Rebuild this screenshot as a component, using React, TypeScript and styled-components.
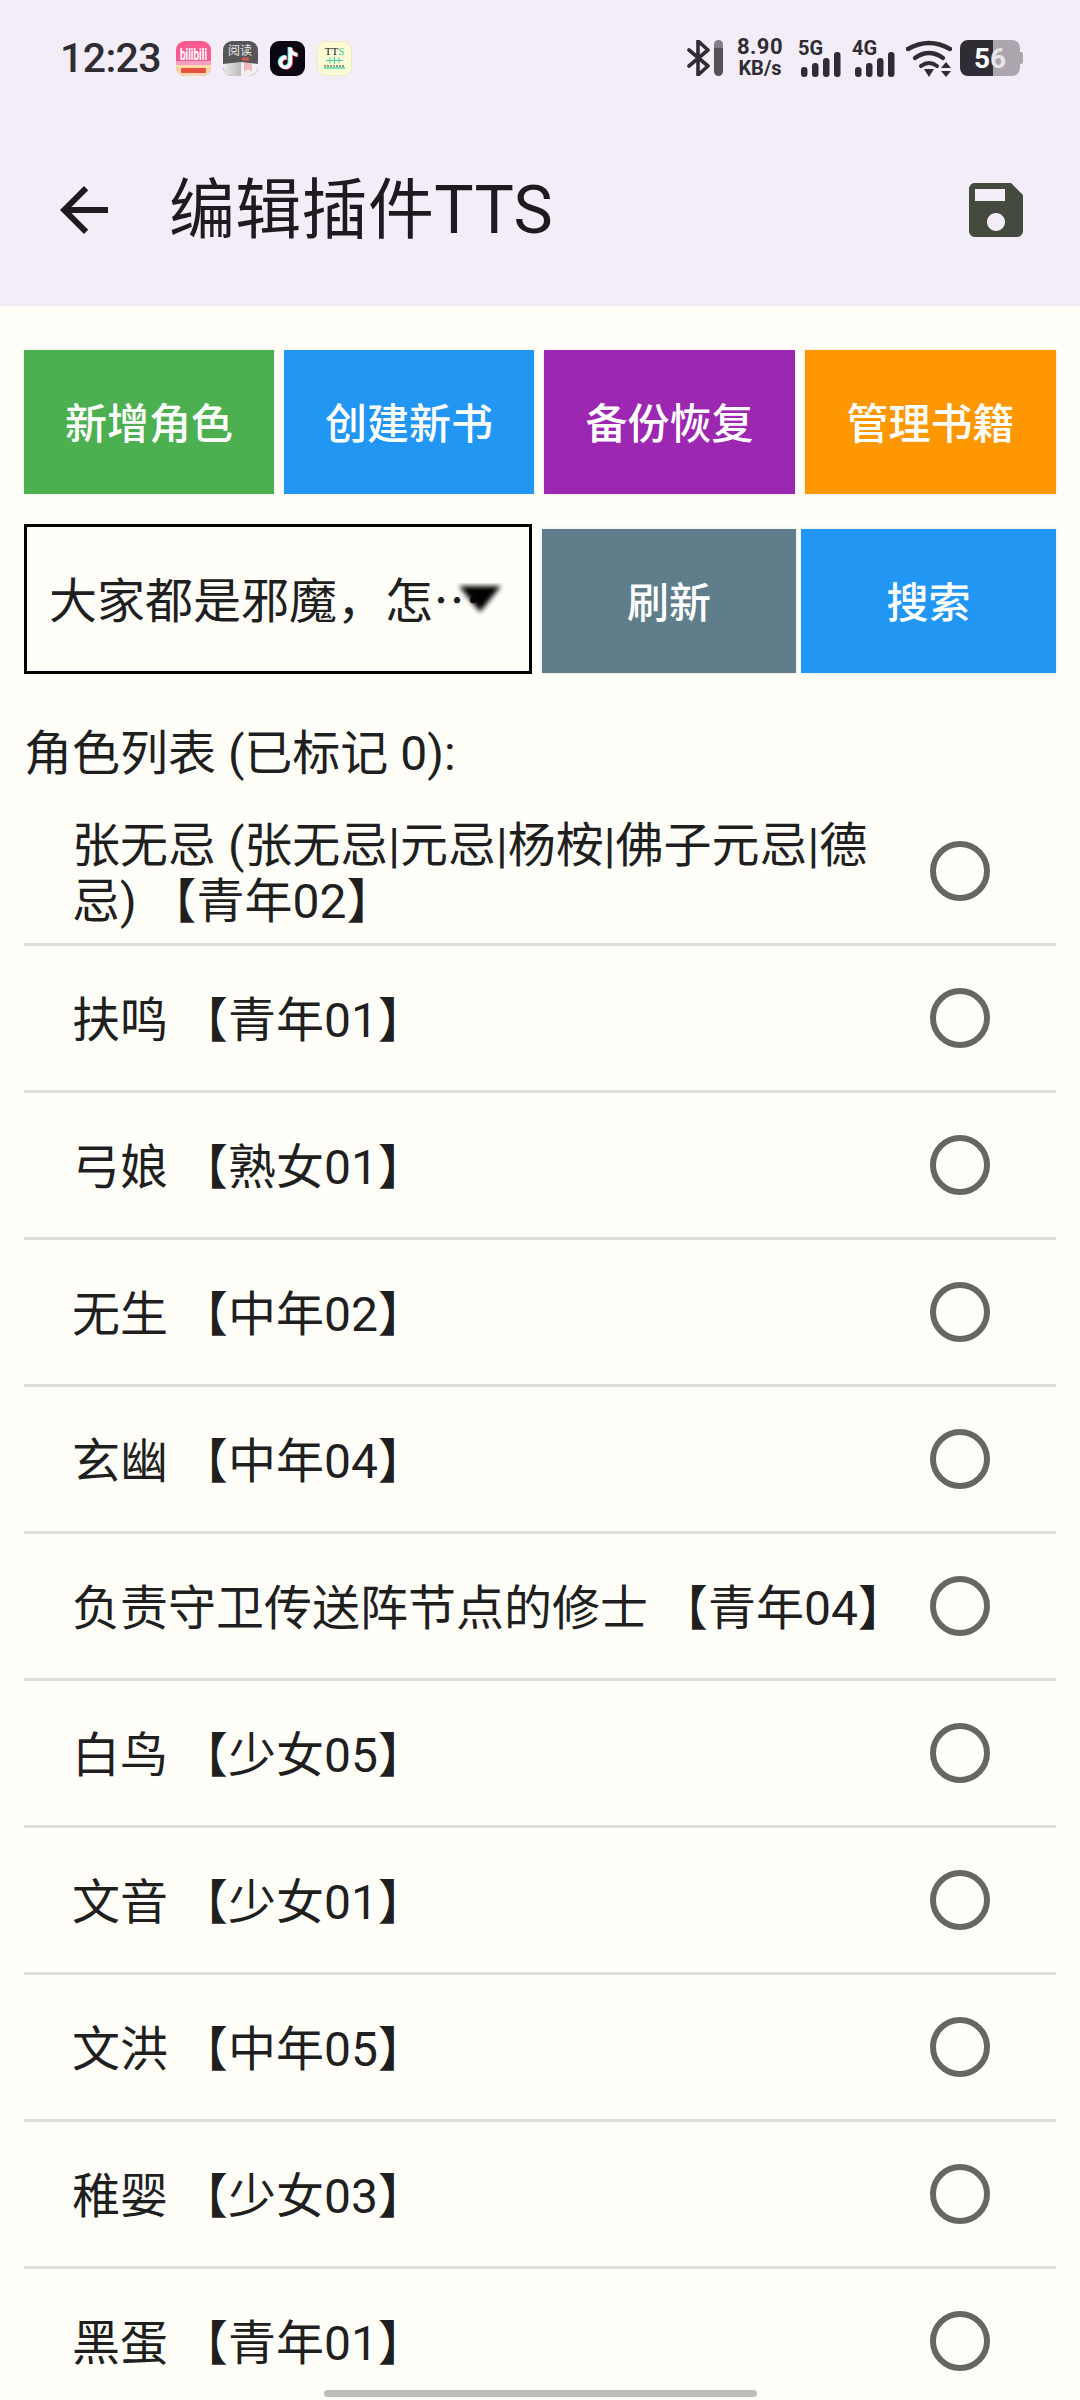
import React from "react";
import styled, { createGlobalStyle } from "styled-components";

const GlobalStyle = createGlobalStyle`
  html, body {
    margin: 0;
    padding: 0;
    background: #fffef8;
  }
  * {
    box-sizing: border-box;
  }
`;

const Page = styled.div`
  position: relative;
  width: 1080px;
  height: 2400px;
  overflow: hidden;
  background: #fffef8;
  color: #1d1b20;
  font-family: Roboto, "Noto Sans CJK SC", sans-serif;
`;

const Header = styled.header`
  height: 306px;
  background: #f3edf7;
`;

const StatusBar = styled.div`
  display: flex;
  align-items: flex-start;
  justify-content: space-between;
  height: 114px;
  padding: 40px 60px 0 60px;
  color: #2f2d33;
`;

const StatusLeft = styled.div`
  display: flex;
  align-items: center;
  height: 36px;
`;

const Clock = styled.span`
  width: 116px;
  font-size: 41px;
  font-weight: 500;
  line-height: 36px;
  letter-spacing: -0.6px;
`;

const AppIcons = styled.div`
  display: flex;
  gap: 12px;
`;

const AppIconSvg = styled.svg`
  display: block;
  width: 35px;
  height: 35px;
`;

const StatusRight = styled.div`
  display: flex;
  align-items: flex-start;
  height: 37px;
`;

const BluetoothIcon = styled.svg`
  display: block;
  width: 24px;
  height: 36px;
  margin-right: 3px;
`;

const HotspotBar = styled.div`
  width: 9px;
  height: 36px;
  border-radius: 5px;
  background: linear-gradient(#807e84 0 8px, #555358 8px);
  margin-right: 13px;
`;

const Speed = styled.div`
  display: flex;
  flex-direction: column;
  align-items: center;
  width: 48px;
  margin-right: 14px;
  font-weight: 700;
`;

const SpeedValue = styled.span`
  font-size: 22px;
  line-height: 20px;
  margin-top: -3px;
  letter-spacing: 0.4px;
`;

const SpeedUnit = styled.span`
  font-size: 20px;
  line-height: 20px;
  margin-top: 1px;
  font-weight: 700;
`;

const SignalIcon = styled.svg`
  display: block;
  width: 44px;
  height: 44px;
  margin: -6px 10px 0 0;
`;

const WifiIcon = styled.svg`
  display: block;
  width: 46px;
  height: 38px;
  margin-right: 8px;
`;

const Battery = styled.div`
  position: relative;
  display: flex;
  align-items: center;
  justify-content: center;
  width: 60px;
  height: 36px;
  border-radius: 8px;
  background: linear-gradient(90deg, #2f2d33 0 33px, #aba6ad 33px);
  font-size: 28px;
  font-weight: 700;
  color: #fff;

  &::after {
    content: "";
    position: absolute;
    right: -3px;
    top: 12px;
    width: 3px;
    height: 12px;
    border-radius: 0 2px 2px 0;
    background: #aba6ad;
  }
`;

const BatteryDigit = styled.span<{ $dim?: boolean }>`
  color: ${(p) => (p.$dim ? "#e8e6ea" : "#fff")};
`;

const Toolbar = styled.div`
  display: flex;
  align-items: center;
  height: 192px;
  padding: 0 48px;
`;

const ToolIcon = styled.svg`
  display: block;
  flex: none;
  width: 72px;
  height: 72px;
`;

const Title = styled.h1`
  flex: 1;
  margin: 2px 0 0 49px;
  font-size: 66px;
  font-weight: 400;
  line-height: 84px;
  letter-spacing: 0.3px;
  color: #1d1b20;
`;

const Content = styled.main`
  padding: 44px 24px 0;
`;

const ActionRow = styled.div`
  display: grid;
  grid-template-columns: 250px 250px 251px 251px;
  gap: 10px;
`;

const ColorButton = styled.button<{ $bg: string }>`
  display: flex;
  align-items: center;
  justify-content: center;
  height: 144px;
  padding: 0 0 4px;
  border: 0;
  border-radius: 0;
  background: ${(p) => p.$bg};
  box-shadow: 0 0 3px rgba(0, 0, 0, 0.12);
  color: #fff;
  font-family: inherit;
  font-size: 42px;
  font-weight: 500;
`;

const BookRow = styled.div`
  display: flex;
  align-items: flex-start;
  margin-top: 30px;
`;

const BookSelect = styled.div`
  position: relative;
  flex: 0 0 508px;
  display: flex;
  align-items: center;
  height: 150px;
  margin-right: 10px;
  padding: 0 0 4px 22px;
  border: 3px solid #000;
  font-family: "Noto Sans CJK SC", sans-serif;
  font-size: 48px;
  color: #1f1f1f;
  white-space: nowrap;
`;

const SelectArrow = styled.svg`
  position: absolute;
  left: 428px;
  top: 56px;
  width: 50px;
  height: 36px;
`;

const BookButtons = styled.div`
  flex: 1;
  display: grid;
  grid-template-columns: 254px 255px;
  gap: 5px;
  margin-top: 5px;
`;

const ListLabel = styled.div`
  margin: 52px 0 0 0;
  font-size: 48px;
  line-height: 56px;
  color: #1f1f1f;
`;

const RoleList = styled.ul`
  list-style: none;
  margin: 17px 0 0;
  padding: 0;
`;

const RoleRow = styled.li`
  display: flex;
  align-items: center;
  height: 147px;
  padding: 0 66px 0 48px;
  border-bottom: 3px solid #deded9;
`;

const RoleName = styled.span`
  flex: 1;
  padding: 5px 20px 0 0;
  font-size: 48px;
  line-height: 56px;
  color: #1f1f1f;
`;

const Radio = styled.span`
  flex: none;
  width: 60px;
  height: 60px;
  border: 6px solid #666662;
  border-radius: 50%;
`;

const GestureBar = styled.div`
  position: absolute;
  left: 324px;
  bottom: 3px;
  width: 433px;
  height: 7px;
  border-radius: 4px;
  background: #bebeb8;
`;

const roles = [
  "张无忌 (张无忌|元忌|杨桉|佛子元忌|德忌) 【青年02】",
  "扶鸣 【青年01】",
  "弓娘 【熟女01】",
  "无生 【中年02】",
  "玄幽 【中年04】",
  "负责守卫传送阵节点的修士 【青年04】",
  "白鸟 【少女05】",
  "文音 【少女01】",
  "文洪 【中年05】",
  "稚婴 【少女03】",
  "黑蛋 【青年01】",
];

const tiktokPath =
  "M12.53.02C13.84 0 15.14.01 16.44 0c.08 1.53.63 3.09 1.75 4.17 1.12 1.11 2.7 1.62 4.24 1.79v4.03c-1.44-.05-2.89-.35-4.2-.97-.57-.26-1.1-.59-1.62-.93-.01 2.92.01 5.84-.02 8.75-.08 1.4-.54 2.79-1.35 3.94-1.31 1.92-3.58 3.17-5.91 3.21-1.43.08-2.86-.31-4.08-1.03-2.02-1.19-3.44-3.37-3.65-5.71-.02-.5-.03-1-.01-1.49.18-1.9 1.12-3.72 2.58-4.96 1.66-1.44 3.98-2.13 6.15-1.72.02 1.48-.04 2.96-.04 4.44-.99-.32-2.15-.23-3.02.37-.63.41-1.11 1.04-1.36 1.75-.21.51-.15 1.07-.14 1.61.24 1.64 1.82 3.02 3.5 2.87 1.12-.01 2.19-.66 2.77-1.61.19-.33.4-.67.41-1.06.1-1.79.06-3.57.07-5.36.01-4.03-.01-8.05.02-12.07z";

const BiliIcon = () => (
  <AppIconSvg viewBox="0 0 35 35">
    <defs>
      <clipPath id="biliClip">
        <rect width="35" height="35" rx="9" />
      </clipPath>
    </defs>
    <g clipPath="url(#biliClip)">
      <rect width="35" height="35" fill="#f85c8f" />
      <rect y="20" width="35" height="5" fill="#f5a0c0" />
      <rect y="24" width="35" height="11" fill="#fbd9a8" />
      <rect x="5" y="27" width="25" height="5" rx="1" fill="#e9503f" />
    </g>
    <text transform="translate(17.5 19) scale(1 1.7)" textAnchor="middle" fontSize="10" fontWeight="700" fill="#fff" fontFamily="Roboto, sans-serif">
      bilibili
    </text>
  </AppIconSvg>
);

const ReaderIcon = () => (
  <AppIconSvg viewBox="0 0 35 35">
    <defs>
      <clipPath id="readerClip">
        <rect width="35" height="35" rx="9" />
      </clipPath>
      <linearGradient id="readerPage" x1="0" x2="1" y1="0" y2="0">
        <stop offset="0" stopColor="#ececec" />
        <stop offset="1" stopColor="#bdbdbd" />
      </linearGradient>
    </defs>
    <g clipPath="url(#readerClip)">
      <rect width="35" height="35" fill="#565658" />
      <rect x="19" y="16.5" width="7" height="3" fill="#d9534f" />
      <path d="M0 23 L17.5 21 V35 H0 Z" fill="url(#readerPage)" />
      <path d="M17.5 21 L35 23 V35 H17.5 Z" fill="#f1f0f0" />
      <path d="M21 22 H29 V31 L25 28 L21 31 Z" fill="#f3b8bd" />
    </g>
    <text x="17" y="14" textAnchor="middle" fontSize="12" fill="#e6e6e6" fontFamily="'Noto Sans CJK SC', sans-serif">
      阅读
    </text>
  </AppIconSvg>
);

const TiktokIcon = () => (
  <AppIconSvg viewBox="0 0 35 35">
    <rect width="35" height="35" rx="9" fill="#0a0712" />
    <g transform="translate(7.2 6.5) scale(0.9)">
      <path d={tiktokPath} fill="#25f4ee" transform="translate(-1 -0.6)" />
      <path d={tiktokPath} fill="#fe2c55" transform="translate(1 0.6)" />
      <path d={tiktokPath} fill="#fff" />
    </g>
  </AppIconSvg>
);

const TtsIcon = () => (
  <AppIconSvg viewBox="0 0 35 35">
    <rect x="0.5" y="0.5" width="34" height="34" rx="8.5" fill="#fdfbd6" stroke="#ece8c8" />
    <text x="17.5" y="14" textAnchor="middle" fontSize="11" fill="#111" fontFamily="'Liberation Serif', serif">
      TT<tspan fill="#35c9a0">S</tspan>
    </text>
    <path d="M9 19.5 H26" stroke="#45d1a8" strokeWidth="1" />
    <path d="M13 16.5 V22.5 M17.5 16 V23 M22 16.5 V22.5" stroke="#45d1a8" strokeWidth="1" />
    <path d="M7 25 H28" stroke="#333" strokeWidth="1" strokeDasharray="2 1" />
    <path d="M7 27 H28" stroke="#45d1a8" strokeWidth="1.4" />
  </AppIconSvg>
);

const Signal = ({ label }: { label: string }) => (
  <SignalIcon viewBox="0 -6 44 44">
    <text x="0" y="15" fontSize="20" fontWeight="700" fill="#2f2d33" fontFamily="Roboto, sans-serif">
      {label}
    </text>
    <rect x="3" y="27" width="6.5" height="10" rx="3" fill="#2f2d33" />
    <rect x="14" y="23" width="6.5" height="14" rx="3" fill="#2f2d33" />
    <rect x="25" y="18" width="6.5" height="19" rx="3" fill="#2f2d33" />
    <rect x="36" y="12" width="6.5" height="25" rx="3" fill="#2f2d33" />
  </SignalIcon>
);

const App = () => {
  return (
    <Page>
      <GlobalStyle />
      <Header>
        <StatusBar>
          <StatusLeft>
            <Clock>12:23</Clock>
            <AppIcons>
              <BiliIcon />
              <ReaderIcon />
              <TiktokIcon />
              <TtsIcon />
            </AppIcons>
          </StatusLeft>
          <StatusRight>
            <BluetoothIcon viewBox="0 0 24 36">
              <path d="M2 10 L21 26 L11 35 V1 L21 10 L2 26" fill="none" stroke="#2f2d33" strokeWidth="3.6" strokeLinejoin="round" strokeLinecap="round" />
            </BluetoothIcon>
            <HotspotBar />
            <Speed>
              <SpeedValue>8.90</SpeedValue>
              <SpeedUnit>KB/s</SpeedUnit>
            </Speed>
            <Signal label="5G" />
            <Signal label="4G" />
            <WifiIcon viewBox="0 0 46 38">
              <path d="M2 9 Q23 -3 44 9" fill="none" stroke="#2f2d33" strokeWidth="4.4" strokeLinecap="round" />
              <path d="M9 18 Q23 8 37 18" fill="none" stroke="#2f2d33" strokeWidth="4.4" strokeLinecap="round" />
              <path d="M15 26 Q23 20 31 26" fill="none" stroke="#2f2d33" strokeWidth="4" strokeLinecap="round" />
              <path d="M18 29 H28 L23 37 Z" fill="#2f2d33" />
              <path d="M35 28 L40 22 L45 28 Z M35 31 H45 L40 37 Z" fill="#2f2d33" />
            </WifiIcon>
            <Battery>
              <span>5</span>
              <BatteryDigit $dim>6</BatteryDigit>
            </Battery>
          </StatusRight>
        </StatusBar>
        <Toolbar>
          <ToolIcon viewBox="0 0 24 24" fill="#1d1b20">
            <path d="M20 11H7.83l5.59-5.59L12 4l-8 8 8 8 1.41-1.41L7.83 13H20v-2z" />
          </ToolIcon>
          <Title>编辑插件TTS</Title>
          <ToolIcon viewBox="0 0 24 24" fill="#454a3f">
            <path d="M17 3H5c-1.11 0-2 .9-2 2v14c0 1.1.89 2 2 2h14c1.1 0 2-.9 2-2V7l-4-4zm-5 16c-1.66 0-3-1.34-3-3s1.34-3 3-3 3 1.34 3 3-1.34 3-3 3zm3-10H5V5h10v4z" />
          </ToolIcon>
        </Toolbar>
      </Header>
      <Content>
        <ActionRow>
          <ColorButton $bg="#4caf50">新增角色</ColorButton>
          <ColorButton $bg="#2196f3">创建新书</ColorButton>
          <ColorButton $bg="#9c27b0">备份恢复</ColorButton>
          <ColorButton $bg="#ff9800">管理书籍</ColorButton>
        </ActionRow>
        <BookRow>
          <BookSelect>
            大家都是邪魔，怎⋯
            <SelectArrow viewBox="0 0 50 36">
              <defs>
                <filter id="arrowBlur" x="-20%" y="-20%" width="140%" height="140%">
                  <feGaussianBlur stdDeviation="2.4" />
                </filter>
              </defs>
              <path d="M4 3 H46 L25 29 Z" fill="#000" filter="url(#arrowBlur)" />
            </SelectArrow>
          </BookSelect>
          <BookButtons>
            <ColorButton $bg="#607d8b">刷新</ColorButton>
            <ColorButton $bg="#2196f3">搜索</ColorButton>
          </BookButtons>
        </BookRow>
        <ListLabel>角色列表 (已标记 0):</ListLabel>
        <RoleList>
          {roles.map((role) => (
            <RoleRow key={role}>
              <RoleName>{role}</RoleName>
              <Radio />
            </RoleRow>
          ))}
        </RoleList>
      </Content>
      <GestureBar />
    </Page>
  );
};

export default App;
